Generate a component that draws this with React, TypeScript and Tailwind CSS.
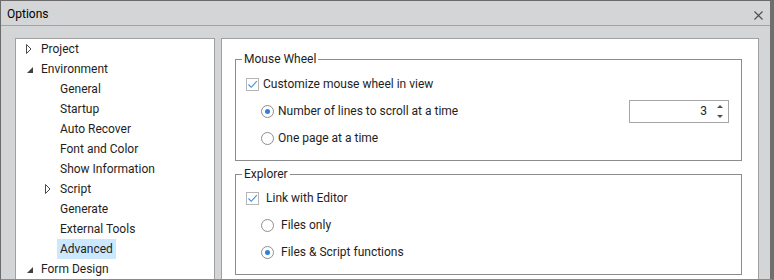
import React from "react";

const FONT = { fontFamily: 'Roboto, "Noto Sans", sans-serif' };

type Node = { label: string; level: number; arrow?: "open" | "closed"; selected?: boolean };

const tree: Node[] = [
  { label: "Project", level: 0, arrow: "closed" },
  { label: "Environment", level: 0, arrow: "open" },
  { label: "General", level: 1 },
  { label: "Startup", level: 1 },
  { label: "Auto Recover", level: 1 },
  { label: "Font and Color", level: 1 },
  { label: "Show Information", level: 1 },
  { label: "Script", level: 1, arrow: "closed" },
  { label: "Generate", level: 1 },
  { label: "External Tools", level: 1 },
  { label: "Advanced", level: 1, selected: true },
  { label: "Form Design", level: 0, arrow: "open" },
];

function Arrow({ kind }: { kind?: "open" | "closed" }) {
  if (kind === "closed")
    return (
      <svg width="6" height="10" viewBox="0 0 6 10" className="block">
        <path d="M0.5 0.5 L5 5 L0.5 9.5 Z" fill="none" stroke="#4a4a4a" strokeWidth="1" />
      </svg>
    );
  if (kind === "open")
    return (
      <svg width="6" height="6" viewBox="0 0 6 6" className="block translate-x-[1px] translate-y-[1px]">
        <polygon points="6,0 6,6 0,6" fill="#404040" />
      </svg>
    );
  return null;
}

function Checkbox() {
  return (
    <div className="w-[13px] h-[13px] border border-[#b5b5b5] bg-white flex items-center justify-center shrink-0">
      <svg width="11" height="11" viewBox="0 0 11 11" className="block">
        <path d="M1.5 5.5 L4.2 8.3 L9.8 2.2" fill="none" stroke="#3a8ee6" strokeWidth="1.1" />
      </svg>
    </div>
  );
}

function Radio({ checked }: { checked?: boolean }) {
  return (
    <div className="w-[13px] h-[13px] rounded-full border border-[#8e8e8e] bg-white flex items-center justify-center shrink-0">
      {checked && <div className="w-[5px] h-[5px] rounded-full bg-[#2d7fe0]" />}
    </div>
  );
}

export default function App() {
  return (
    <div
      className="w-[774px] h-[280px] bg-[#d4d5d7] border-l border-t border-b border-r-[4px] border-l-[#6b6b6b] border-t-[#6b6b6b] border-b-[#8a8a8a] border-r-[#6e6e6e] flex flex-col overflow-hidden text-[12px] text-[#1e1e1e]"
      style={FONT}
    >
      {/* title bar */}
      <div className="h-[25px] shrink-0 border-b border-[#a3a3a3] flex items-start justify-between pl-[6px] pr-[7px]">
        <div className="pt-[5px] leading-[16px] text-black">Options</div>
        <svg width="9" height="9" viewBox="0 0 9 9" className="block mt-[10px]">
          <path d="M0.5 0.5 L8.5 8.5 M8.5 0.5 L0.5 8.5" stroke="#4d4d4d" strokeWidth="1.1" />
        </svg>
      </div>

      {/* body */}
      <div className="flex-1 flex pl-[14px] pt-[12px] gap-[6px] min-h-0">
        {/* tree */}
        <div className="w-[200px] bg-white border-l border-t border-r border-[#a0a0a0] flex flex-col">
          {tree.map((n) => (
            <div
              key={n.label}
              className="h-[20px] flex items-center shrink-0"
              style={{ paddingLeft: 3 + n.level * 19 }}
            >
              <div className="w-[19px] h-[20px] flex items-center justify-center">
                <Arrow kind={n.arrow} />
              </div>
              <div
                className={
                  "h-[20px] px-[3px] flex items-center leading-[16px] " +
                  (n.selected ? "bg-[#cce8ff]" : "")
                }
              >
                {n.label}
              </div>
            </div>
          ))}
        </div>

        {/* settings */}
        <div className="w-[538px] bg-white border-l border-t border-r border-[#a0a0a0] pt-[12px] pl-[13px] pr-[16px] flex flex-col">
          <fieldset className="border border-[#8c8c8c] pb-[12px]">
            <legend className="ml-[6px] px-[2px] leading-[17px]">Mouse Wheel</legend>
            <div className="flex flex-col gap-[7px] mt-[6px] pl-[10px]">
              <div className="h-[20px] flex items-center gap-[4px]">
                <Checkbox />
                <span className="leading-[16px]">Customize mouse wheel in view</span>
              </div>
              <div className="h-[20px] flex items-center pl-[15px] pr-[12px]">
                <Radio checked />
                <span className="leading-[16px] ml-[4px]">Number of lines to scroll at a time</span>
                <div className="ml-auto w-[100px] h-[23px] shrink-0 border border-[#a6a6a6] bg-white flex items-center">
                  <div className="flex-1 text-right pr-[4px] leading-[16px]">3</div>
                  <div className="w-[17px] h-full flex flex-col items-center justify-center gap-[7px]">
                    <svg width="6" height="3" viewBox="0 0 6 3" className="block">
                      <polygon points="3,0 6,3 0,3" fill="#505050" />
                    </svg>
                    <svg width="6" height="3" viewBox="0 0 6 3" className="block">
                      <polygon points="0,0 6,0 3,3" fill="#505050" />
                    </svg>
                  </div>
                </div>
              </div>
              <div className="h-[20px] flex items-center pl-[15px]">
                <Radio />
                <span className="leading-[16px] ml-[4px]">One page at a time</span>
              </div>
            </div>
          </fieldset>

          <fieldset className="border border-[#8c8c8c] pb-[12px] mt-[5px]">
            <legend className="ml-[6px] px-[2px] leading-[17px]">Explorer</legend>
            <div className="flex flex-col gap-[7px] mt-[5px] pl-[10px]">
              <div className="h-[20px] flex items-center gap-[7px]">
                <Checkbox />
                <span className="leading-[16px]">Link with Editor</span>
              </div>
              <div className="h-[20px] flex items-center pl-[15px]">
                <Radio />
                <span className="leading-[16px] ml-[7px]">Files only</span>
              </div>
              <div className="h-[20px] flex items-center pl-[15px]">
                <Radio checked />
                <span className="leading-[16px] ml-[7px]">Files &amp; Script functions</span>
              </div>
            </div>
          </fieldset>
        </div>
      </div>
    </div>
  );
}
